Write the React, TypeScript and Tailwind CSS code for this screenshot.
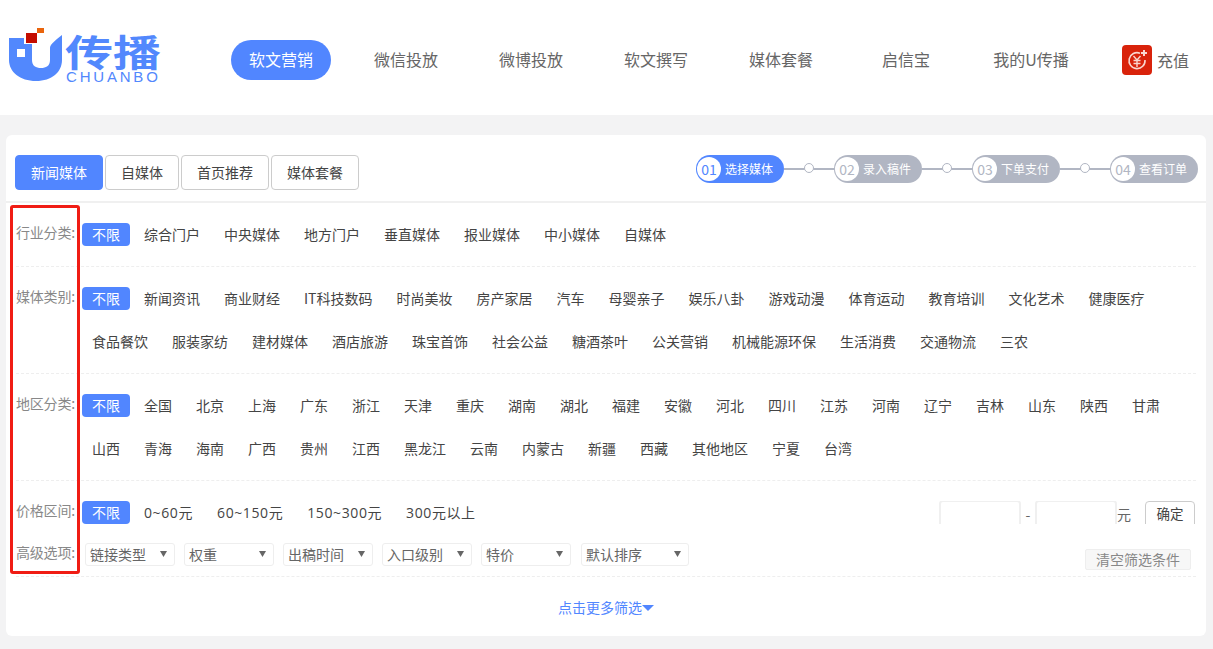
import React from 'react';

const navItems = ['软文营销', '微信投放', '微博投放', '软文撰写', '媒体套餐', '启信宝', '我的U传播'];
const tabs = ['新闻媒体', '自媒体', '首页推荐', '媒体套餐'];
const steps = ['选择媒体', '录入稿件', '下单支付', '查看订单'];

const industry = ['综合门户', '中央媒体', '地方门户', '垂直媒体', '报业媒体', '中小媒体', '自媒体'];
const mediaLines = [
  ['新闻资讯', '商业财经', 'IT科技数码', '时尚美妆', '房产家居', '汽车', '母婴亲子', '娱乐八卦', '游戏动漫', '体育运动', '教育培训', '文化艺术', '健康医疗'],
  ['食品餐饮', '服装家纺', '建材媒体', '酒店旅游', '珠宝首饰', '社会公益', '糖酒茶叶', '公关营销', '机械能源环保', '生活消费', '交通物流', '三农'],
];
const regionLines = [
  ['全国', '北京', '上海', '广东', '浙江', '天津', '重庆', '湖南', '湖北', '福建', '安徽', '河北', '四川', '江苏', '河南', '辽宁', '吉林', '山东', '陕西', '甘肃'],
  ['山西', '青海', '海南', '广西', '贵州', '江西', '黑龙江', '云南', '内蒙古', '新疆', '西藏', '其他地区', '宁夏', '台湾'],
];
const prices = ['0~60元', '60~150元', '150~300元', '300元以上'];
const selects = [
  { label: '链接类型', w: 'w-[90px]' },
  { label: '权重', w: 'w-[90px]' },
  { label: '出稿时间', w: 'w-[90px]' },
  { label: '入口级别', w: 'w-[90px]' },
  { label: '特价', w: 'w-[90px]' },
  { label: '默认排序', w: 'w-[108px]' },
];

const Logo = () => (
  <div className="relative w-[152px] h-[52px] mt-[3px]">
    <svg width="56" height="56" viewBox="0 0 56 56" className="absolute left-0 top-[-6px]">
      <path
        fillRule="evenodd"
        d="M0 11H15V17H23V33C23 39 27 41 32 41C37 41 41 39 41 33V21C41 17 47 13 53 8V33C53 45 43 54 27 54C11 54 0 45 0 33ZM8 22V30H16V22Z"
        fill="#5288fd"
      />
      <rect x="17" y="6" width="11" height="10" fill="#c40d00" />
      <rect x="28" y="1" width="7" height="5" fill="#e9640c" />
    </svg>
    <span className="absolute left-[56px] top-[1px] origin-top scale-y-[0.77] text-[48px] leading-[44px] font-bold text-[#5288fd] whitespace-nowrap">传播</span>
    <span className="absolute left-[57px] top-[37px] text-[15px] leading-[14px] font-['Liberation_Sans',sans-serif] text-[#5288fd] tracking-[2.8px] whitespace-nowrap">CHUANBO</span>
  </div>
);

const RechargeIcon = () => (
  <div className="w-[30px] h-[30px] rounded-[4px] bg-[#d9230b] flex items-center justify-center">
    <svg width="24" height="24" viewBox="0 0 24 24" fill="none" stroke="#f9d6cf" strokeWidth="1.6">
      <path d="M15 5.2A8 8 0 1 0 20 12" />
      <path d="M8.5 8L12 12L15.5 8M8.5 12.5H15.5M8.5 15.5H15.5M12 12V19" strokeWidth="1.4" />
      <path d="M19 2V8M16 5H22" strokeWidth="2" />
    </svg>
  </div>
);

const Unlimited = () => (
  <span className="h-[23px] w-[48px] mr-1 rounded-[4px] bg-[#5186ff] text-white text-[14px] leading-[23px] text-center shrink-0">不限</span>
);

const Item = ({ text }: { text: string }) => (
  <span className="h-[23px] px-2.5 mr-1 text-[14px] leading-[23px] text-[#444] whitespace-nowrap shrink-0">{text}</span>
);

const Label = ({ text }: { text: string }) => (
  <div className="w-[66px] shrink-0 h-[23px] text-[14px] leading-[19px] tracking-[-0.2px] text-[#888] whitespace-nowrap">{text}:</div>
);

const FilterRow = ({ label, lines }: { label: string; lines: string[][] }) => (
  <div className="flex mx-2.5 pt-5 border-b border-dashed border-[#eee]">
    <Label text={label} />
    <div className="flex flex-col">
      {lines.map((line, i) => (
        <div key={i} className="flex h-[23px] mb-5">
          {i === 0 && <Unlimited />}
          {line.map((t) => (
            <Item key={t} text={t} />
          ))}
        </div>
      ))}
    </div>
  </div>
);

const Step = ({ n, text, active }: { n: number; text: string; active: boolean }) => (
  <div className={`flex items-center w-[88px] h-[28px] rounded-[14px] shrink-0 ${active ? 'bg-[#5186ff]' : 'bg-[#b1b6c3]'}`}>
    <span className={`w-[24px] h-[24px] ml-[1px] rounded-full bg-white text-center text-[14px] leading-[24px] shrink-0 ${active ? 'text-[#5186ff]' : 'text-[#b1b6c3]'}`}>
      0{n}
    </span>
    <span className="ml-[4px] text-[12px] leading-[28px] text-white whitespace-nowrap">{text}</span>
  </div>
);

const Connector = () => (
  <div className="relative w-[50px] h-[28px] shrink-0 flex items-center justify-center">
    <div className="w-full h-[2px] bg-[#b1b6c3]" />
    <div className="absolute left-[20px] top-[8px] w-[10px] h-[10px] rounded-full bg-white border border-[#b1b6c3]" />
  </div>
);

const App = () => {
  return (
    <div className="w-[1213px] h-[649px] overflow-hidden bg-[#f3f3f4] font-['Noto_Sans_CJK_SC','Liberation_Sans',sans-serif]">
      <header className="h-[115px] bg-white flex items-center pl-[9px]">
        <Logo />
        <nav className="flex ml-[70px] gap-[25px] mt-[5px]">
          {navItems.map((t, i) => (
            <span
              key={t}
              className={`w-[100px] h-[40px] rounded-[20px] text-[16px] leading-[39px] text-center whitespace-nowrap ${i === 0 ? 'bg-[#5186ff] text-white' : 'text-[#666]'}`}
            >
              {t}
            </span>
          ))}
        </nav>
        <div className="flex items-center ml-[41px] mt-[5px]">
          <RechargeIcon />
          <span className="ml-[5px] text-[16px] text-[#666]">充值</span>
        </div>
      </header>

      <main className="relative mt-5 mx-1.5 w-[1200px] h-[501px] rounded-[6px] bg-white">
        <div className="flex justify-between h-[68px] border-b-2 border-[#f0f0f0] pt-5 pl-[9px] pr-2">
          <div className="flex gap-0.5">
            {tabs.map((t, i) => (
              <span
                key={t}
                className={`h-[35px] px-[15px] rounded-[4px] border text-[14px] leading-[33px] whitespace-nowrap ${i === 0 ? 'bg-[#5186ff] border-[#5186ff] text-white' : 'bg-white border-[#ccc] text-[#444]'}`}
              >
                {t}
              </span>
            ))}
          </div>
          <div className="flex">
            {steps.map((t, i) => (
              <React.Fragment key={t}>
                {i > 0 && <Connector />}
                <Step n={i + 1} text={t} active={i === 0} />
              </React.Fragment>
            ))}
          </div>
        </div>

        <FilterRow label="行业分类" lines={[industry]} />
        <FilterRow label="媒体类别" lines={mediaLines} />
        <FilterRow label="地区分类" lines={regionLines} />

        <div className="mx-2.5 pt-5 border-b border-dashed border-[#eee] pb-2.5">
          <div className="flex h-[23px] overflow-hidden">
            <Label text="价格区间" />
            <Unlimited />
            {prices.map((t) => (
              <span key={t} className="h-[23px] px-2.5 mr-1 text-[14px] leading-[23px] text-[#444] whitespace-nowrap shrink-0 tracking-[0.6px] font-['Open_Sans','Noto_Sans_CJK_SC',sans-serif]">
                {t}
              </span>
            ))}
            <div className="ml-auto flex items-start text-[14px] text-[#666]">
              <div className="w-[82px] h-[30px] -mt-px rounded-[4px] border-2 border-[#f0f0f0] bg-white" />
              <span className="w-[14px] text-center leading-[26px]">-</span>
              <div className="w-[82px] h-[30px] -mt-px rounded-[4px] border-2 border-[#f0f0f0] bg-white" />
              <span className="w-[28px] leading-[26px]">元</span>
              <div className="w-[50px] h-[30px] mr-px rounded-[4px] border border-[#ccc] text-center text-[#444] text-[13.5px] leading-[23px]">确定</div>
            </div>
          </div>
          <div className="flex items-start mt-[19px] h-[23px]">
            <Label text="高级选项" />
            <div className="flex gap-[9px] ml-[3px]">
              {selects.map((s, i) => (
                <div key={s.label} className={`flex items-center justify-between ${s.w} ${i === 5 ? 'ml-px' : ''} h-[23px] pl-[4px] pr-[7px] rounded-[3px] border border-[#eee] text-[14px] leading-[21px] text-[#666]`}>
                  <span className="whitespace-nowrap">{s.label}</span>
                  <svg width="7" height="6" viewBox="0 0 7 6" className="mb-[2px]">
                    <path d="M0 0H7L3.5 6Z" fill="#666" />
                  </svg>
                </div>
              ))}
            </div>
            <span className="ml-auto mr-[5px] mt-[6px] h-[21px] w-[106px] rounded-[2px] border border-[#eee] bg-[#f7f7f7] text-center text-[14px] leading-[18px] text-[#888]">清空筛选条件</span>
          </div>
        </div>

        <div className="flex justify-center items-center mt-[20px] h-5">
          <span className="text-[14px] leading-[18px] text-[#5186ff]">点击更多筛选</span>
          <svg width="12" height="6" viewBox="0 0 12 6" className="mt-[2px]">
            <path d="M0 0H12L6 6Z" fill="#5186ff" />
          </svg>
        </div>

        <div className="absolute left-[4px] top-[70px] w-[70px] h-[369px] rounded-[3px] border-[3px] border-[#f01c14]" />
      </main>
    </div>
  );
};

export default App;
